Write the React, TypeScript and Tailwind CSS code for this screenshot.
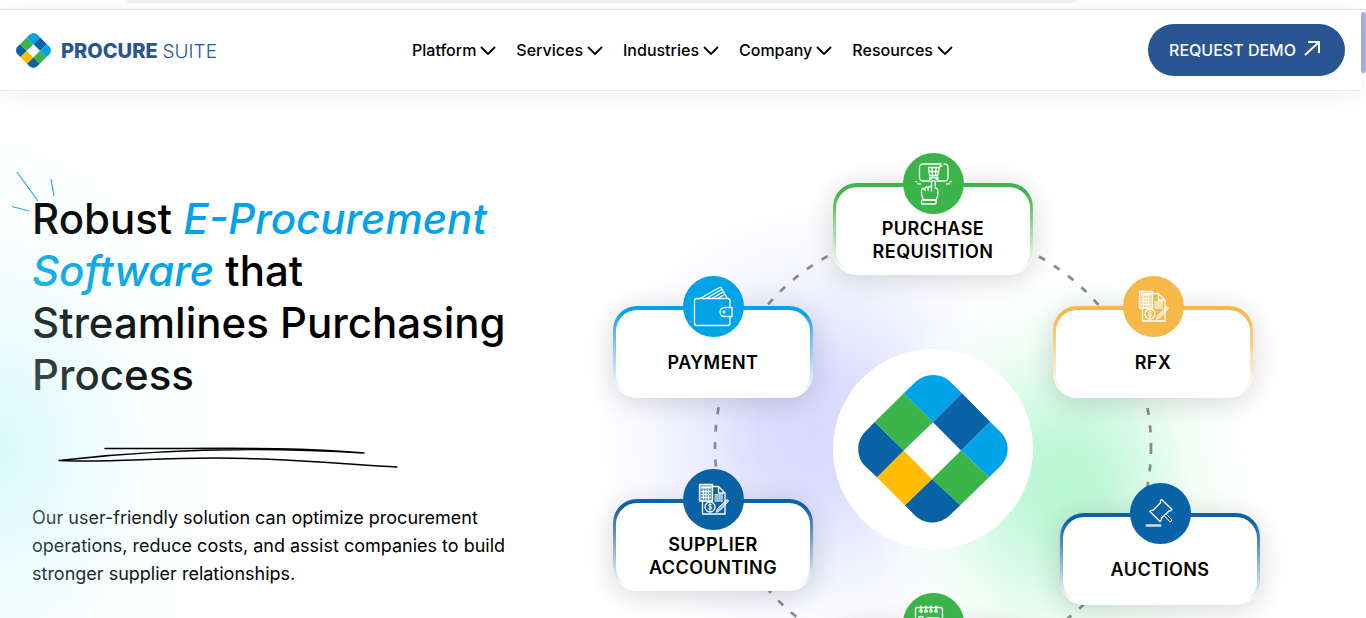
import type { ReactNode } from "react";

const NAV_ITEMS = ["Platform", "Services", "Industries", "Company", "Resources"];

const LogoMark = ({ className }: { className?: string }) => (
  <svg viewBox="0 0 150 148" className={className} aria-hidden="true">
    <path fill="#00a3e8" d="M45.7 18.3 58 6.5C67-2 82-2 91 5.5L104 18.3 75 47.3Z" />
    <path fill="#0a62a6" d="M104 18.3 132.3 47 103 75.6 75 47.3Z" />
    <path fill="#00a3e8" d="M132.3 47 142.5 57C152 66 152 82 142.5 91L131 102.3 103 75.6Z" />
    <path fill="#3bb54a" d="M103 75.6 131 102.3 102.3 130.3 74 104Z" />
    <path fill="#0a62a6" d="M74 104 102.3 130.3 92 140C82 150 67 150 57 140.5L47 130.3Z" />
    <path fill="#ffbc00" d="M45.7 75.6 74 104 47 130.3 19 102.3Z" />
    <path fill="#0a62a6" d="M16.7 47 45.7 75.6 19 102.3 7 91C-2 82-2 66 7 57Z" />
    <path fill="#3bb54a" d="M45.7 18.3 75 47.3 45.7 75.6 16.7 47Z" />
  </svg>
);

const Icon = ({ children }: { children: ReactNode }) => (
  <svg
    viewBox="0 0 61 61"
    className="size-full"
    fill="none"
    stroke="white"
    strokeWidth="1.3"
    strokeLinecap="round"
    strokeLinejoin="round"
    aria-hidden="true"
  >
    {children}
  </svg>
);

const CartIcon = () => (
  <Icon>
    <path d="M27 28H20a3.5 3.5 0 0 1-3.5-3.5v-10A3.5 3.5 0 0 1 20 11h18M41 11a3.5 3.5 0 0 1 4 3.5v10A3.5 3.5 0 0 1 41.5 28H34" />
    <path d="M39 13h-2l-2.5 9.5h-8L25.500 14.500h11M26 18.500h9.500M29 14.500l.5 8M33 14.500l-.5 8M27 24.500h8" />
    <circle cx="27.5" cy="25.5" r="1" />
    <circle cx="34" cy="25.5" r="1" />
    <path d="M28.500 38V29.500a1.900 1.900 0 0 1 3.800 0V35c2 0 2.500 1 2.500 3V42c0 2-1.500 3-1.500 5H20.500c0-2-2-3-2-6V37.500c0-1.500 1-2 2-2s1.500 1 1.500 2v-2c0-2 3.200-2 3.200 0v2-2.500c0-2 3.300-2 3.300 0" />
    <rect x="18.5" y="47" width="14.5" height="4" rx="1" />
    <path d="M12.500 28.500l1.500.5M14.500 31l1-.5M17 31.500v-1M48.500 28.500l-1.500.5M46.500 31l-1-.5M44 31.500v-1" />
  </Icon>
);

const WalletIcon = () => (
  <Icon>
    <rect x="11.5" y="22.5" width="35.5" height="27" rx="2.5" />
    <path d="M18 22 36.500 11.500c1-.5 1.800 0 2.200 1L44 22M24 22l14.500-8.500M30 22l10-6M35.500 22l6-3.500" />
    <path d="M49 31.500h-7.500a4.500 4.500 0 0 0 0 9H49z" fill="#00a3e8" />
    <circle cx="41" cy="36" r="1" fill="white" />
  </Icon>
);

const LedgerIcon = () => (
  <Icon>
    <path d="M29 17.500h6.500l6.500 6.500v21H19.500V32M35.500 17.500V24H42" strokeLinejoin="miter" />
    <rect x="16.5" y="15.5" width="13" height="16.5" fill="white" fillOpacity=".4" />
    <path d="M18.500 18.500h9" strokeWidth="2" />
    <path d="M18.500 22.500h9M18.500 25.500h9M18.500 28.500h9M20.500 21v10M23 21v10M25.500 21v10" strokeWidth="1" strokeDasharray="1.5 1" />
    <rect x="31.5" y="25" width="8.5" height="8" fill="white" fillOpacity=".6" stroke="none" />
    <circle cx="27" cy="38" r="5" />
    <path d="M29 36c-.5-1-3.500-1-3.500.5s3.500 1 3.500 2.500-3 1.500-3.800.2M27 34.500v7" strokeWidth="1" />
    <path d="M33.500 43l1-3.500 9-8.500c1-.8 2.500.5 1.700 1.700L37 41.500z" fill="white" fillOpacity=".6" strokeWidth="1" />
  </Icon>
);

const GavelIcon = () => (
  <Icon>
    <path d="M31.500 16.500 42 26.500c-.5 1-1.500 1.500-3 1.500l-7.500 7c.3 1.500 0 2.500-1.500 3.500L20 28.500c1-1.300 2-1.600 3.200-1.300l7.300-7.500c-.3-1.300 0-2.300 1-3.200z" />
    <path d="M34.500 32.500l1.500-1.500 6 6-1.500 1.800z" strokeWidth="1" />
    <path d="M17 42.500h13" strokeWidth="2.5" opacity=".8" strokeLinecap="square" />
  </Icon>
);

const CalendarIcon = () => (
  <Icon>
    <rect x="12.5" y="14.5" width="27" height="32" rx="2" />
    <path d="M18 13v4M23 13v4M28 13v4M33 13v4" />
    <circle cx="18" cy="18" r="1.2" />
    <circle cx="23" cy="18" r="1.2" />
    <circle cx="28" cy="18" r="1.2" />
    <circle cx="33" cy="18" r="1.2" />
    <circle cx="18" cy="26" r="2.5" />
    <path d="M24 25h12M24 31h12" />
  </Icon>
);

type Step = {
  label?: ReactNode;
  icon: ReactNode;
  place: string;
  edge: string;
  dot: string;
};

const STEPS: Step[] = [
  {
    label: <>PURCHASE<br />REQUISITION</>,
    icon: <CartIcon />,
    place: "left-[230px] top-[92px]",
    edge: "from-[#3bb54a]",
    dot: "bg-[#3bb54a]",
  },
  {
    label: "RFX",
    icon: <LedgerIcon />,
    place: "left-[450px] top-[215px]",
    edge: "from-[#f5b849]",
    dot: "bg-[#f5b849]",
  },
  {
    label: "AUCTIONS",
    icon: <GavelIcon />,
    place: "left-[457px] top-[422px]",
    edge: "from-[#0a62a6]",
    dot: "bg-[#0a62a6]",
  },
  {
    icon: <CalendarIcon />,
    place: "left-[230px] top-[532px]",
    edge: "from-[#3bb54a]",
    dot: "bg-[#3bb54a]",
  },
  {
    label: <>SUPPLIER<br />ACCOUNTING</>,
    icon: <LedgerIcon />,
    place: "left-[10px] top-[408px]",
    edge: "from-[#0a62a6]",
    dot: "bg-[#0a62a6]",
  },
  {
    label: "PAYMENT",
    icon: <WalletIcon />,
    place: "left-[10px] top-[215px]",
    edge: "from-[#00a3e8]",
    dot: "bg-[#00a3e8]",
  },
];

const StepCard = ({ label, icon, place, edge, dot }: Step) => (
  <div
    className={`absolute ${place} ${edge} h-[92px] w-[200px] rounded-3xl bg-linear-to-b from-10% to-[#fcfdfe] to-95% p-[3px] pt-1 shadow-[0_4px_28px_rgba(0,0,0,0.16)]`}
  >
    <div className="flex h-full items-center justify-center rounded-[21px] bg-white pt-5 text-center text-[18px] leading-[23px] font-semibold tracking-wide">
      {label}
    </div>
    <div className={`absolute -top-[30px] left-[70px] size-[61px] rounded-full ${dot}`}>{icon}</div>
  </div>
);

const Header = () => (
  <header className="relative z-10 flex h-[81px] items-center justify-between border-b border-[#e9e9e9] bg-white px-4 shadow-[0_4px_24px_rgba(0,0,0,0.06)]">
    <a href="#home" className="flex items-center gap-[10px] text-[#295592]">
      <LogoMark className="h-[35px] w-[35px]" />
      <span className="flex items-baseline gap-[5px] pt-[2px] leading-6">
        <span className="text-[20px] font-extrabold">PROCURE</span>
        <span className="text-[19px] font-light">SUITE</span>
      </span>
    </a>
    <nav className="flex gap-5">
      {NAV_ITEMS.map((item) => (
        <button key={item} type="button" className="flex items-center gap-1 text-base leading-6 font-medium">
          {item}
          <svg viewBox="0 0 16 16" className="size-4" fill="none" stroke="currentColor" strokeWidth="1.8" strokeLinecap="round" strokeLinejoin="round" aria-hidden="true">
            <path d="M1.500 5.500 8 12l6.500-6.500" />
          </svg>
        </button>
      ))}
    </nav>
    <button type="button" className="flex h-[52px] w-[197px] items-center justify-center gap-2 rounded-full bg-[#295592] pr-1 text-base font-medium text-white">
      REQUEST DEMO
      <svg viewBox="0 0 16 16" className="mb-1 size-4" fill="none" stroke="currentColor" strokeWidth="2" aria-hidden="true">
        <path d="M1 15 14.500 2.500M4 2h11v11" />
      </svg>
    </button>
  </header>
);

const Intro = () => (
  <div className="relative w-[505px] shrink-0 pt-[102px]">
    <svg viewBox="0 0 44 42" className="absolute top-[80px] -left-[21px] h-[42px] w-[44px]" stroke="#1ba6df" strokeWidth="1.2" aria-hidden="true">
      <path d="M6 1 27 30M40 8l3 17M1 35.500 18 40" />
    </svg>
    <h1 className="text-[42px] leading-[52px] font-medium">
      Robust <em className="text-[#00a3e8]">E-Procurement Software</em> that Streamlines Purchasing Process
    </h1>
    <svg viewBox="0 0 342 22" className="relative z-10 mt-[45px] ml-[25px] h-[22px] w-[342px]" fill="none" stroke="#000" strokeWidth="1.5" strokeLinecap="round" strokeLinejoin="round" aria-hidden="true">
      <path d="M48 2.500C150 3 230 0 307 7C210 1 110 2 2 14.500C60 17 110 10 190 12.500C245 14 290 18 340 21" />
    </svg>
    <p className="mt-9 text-[18px] leading-7">
      Our user-friendly solution can optimize procurement operations, reduce costs, and assist companies to build stronger supplier relationships.
    </p>
  </div>
);

const Diagram = () => (
  <div className="flex flex-1 justify-center">
    <div className="relative h-[660px] w-[660px] shrink-0">
      <div className="absolute top-[110px] -left-[10px] h-[460px] w-[440px] bg-[radial-gradient(closest-side,#d9d9ff_0%,#dcdcff_25%,#ebebff_50%,#f8f8ff_75%,#ffffff00_100%)]" />
      <div className="absolute top-[170px] left-[260px] h-[450px] w-[400px] bg-[radial-gradient(closest-side,#b8f6d3_0%,#c0f7d8_20%,#d8fae7_42%,#edfdf4cc_64%,#f8fefb88_82%,#ffffff00_100%)]" />
      <svg viewBox="0 0 660 660" className="absolute inset-0 size-full" fill="none" aria-hidden="true">
        <circle cx="330" cy="356" r="218" stroke="#8b8b8b" strokeWidth="2.7" strokeDasharray="7 10.5" />
      </svg>
      <div className="absolute top-[258px] left-[230px] flex size-[200px] items-center justify-center rounded-full bg-white">
        <LogoMark className="h-[148px] w-[150px]" />
      </div>
      {STEPS.map((step) => (
        <StepCard key={step.place} {...step} />
      ))}
    </div>
  </div>
);

export default function App() {
  return (
    <div className="flex h-screen overflow-hidden bg-white font-['Inter',sans-serif] text-black">
      <div className="min-w-0 flex-1">
        <div className="h-[10px] border-b border-[#dfe0e2] bg-white">
          <div className="mr-[284px] ml-[127px] h-[3px] rounded-b-full bg-[#eaf1fb]" />
        </div>
        <Header />
        <main className="relative flex px-8">
          <Intro />
          <Diagram />
          <div className="pointer-events-none absolute top-[20px] -left-[230px] h-[680px] w-[460px] bg-[radial-gradient(closest-side,#b5f5f488_0%,#b5f5f466_14%,#b9f5f43c_36%,#c4f6f61c_62%,#d0f8f80a_82%,#ffffff00_100%)]" />
        </main>
      </div>
      <div className="mt-[9px] w-[5px] shrink-0 border-t border-[#dfe0e2] bg-white pt-[2px]">
        <div className="h-[61px] rounded-sm bg-[#adaee9]" />
      </div>
    </div>
  );
}
